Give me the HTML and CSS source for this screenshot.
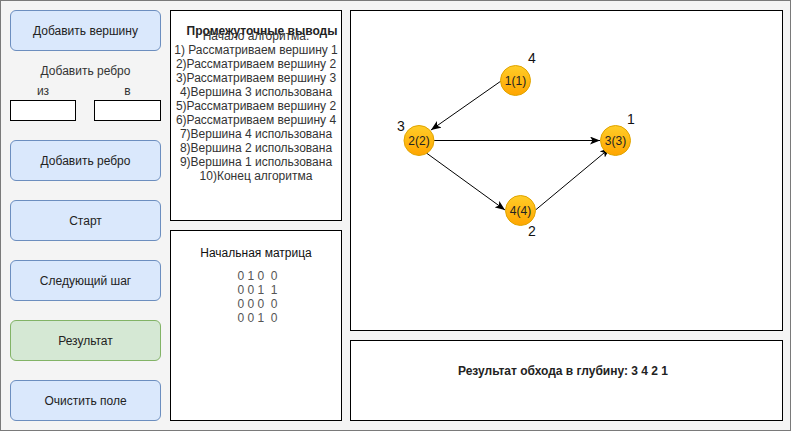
FILE: index.html
```html
<!doctype html>
<html>
  <head>
    <meta charset="utf-8">
    <title>Обход графа в глубину</title>
    <link rel="stylesheet" href="styles.css">
  </head>
  <body>
    <div class="frame">
      <div class="controls">
        <button class="btn">Добавить вершину</button>
        <div class="edgebox">
          <div class="edgetitle">Добавить ребро</div>
          <div class="edgerow">
            <label class="edgefield">из<input type="text" class="edgeinput"></label>
            <label class="edgefield">в<input type="text" class="edgeinput"></label>
          </div>
        </div>
        <button class="btn btn-gap">Добавить ребро</button>
        <button class="btn btn-gap">Старт</button>
        <button class="btn btn-gap">Следующий шаг</button>
        <button class="btn btn-gap btn-green">Результат</button>
        <button class="btn btn-gap">Очистить поле</button>
      </div>
      <div class="middle">
        <div class="panel steps">
          <div class="steptitle">Промежуточные выводы</div>
          <div class="steplist">
            Начало алгоритма.<br>
            1) Рассматриваем вершину 1<br>
            2)Рассматриваем вершину 2<br>
            3)Рассматриваем вершину 3<br>
            4)Вершина 3 использована<br>
            5)Рассматриваем вершину 2<br>
            6)Рассматриваем вершину 4<br>
            7)Вершина 4 использована<br>
            8)Вершина 2 использована<br>
            9)Вершина 1 использована<br>
            10)Конец алгоритма
          </div>
        </div>
        <div class="panel matrix">
          <div class="matrixtitle">Начальная матрица</div>
          <div class="matrixrows">
            0 1 0&nbsp; 0<br>
            0 0 1&nbsp; 1<br>
            0 0 0&nbsp; 0<br>
            0 0 1&nbsp; 0
          </div>
        </div>
      </div>
      <div class="right">
        <div class="panel canvas">
          <svg class="graph" viewBox="351 11 430 319" width="430" height="319">
            <defs>
              <linearGradient id="nodefill" x1="0" y1="0" x2="0" y2="1">
                <stop offset="0" stop-color="#ffcd28"/>
                <stop offset="1" stop-color="#ffa500"/>
              </linearGradient>
              <marker id="arrow" viewBox="0 0 10 8" refX="10" refY="4" markerWidth="10" markerHeight="8" markerUnits="userSpaceOnUse" orient="auto">
                <path d="M0 0 L10 4 L0 8 L2.5 4 Z" fill="#000"/>
              </marker>
            </defs>
            <g class="edges">
              <line x1="501" y1="81" x2="431" y2="130" marker-end="url(#arrow)"/>
              <line x1="434" y1="140.5" x2="600" y2="140.5" marker-end="url(#arrow)"/>
              <line x1="425" y1="152" x2="505" y2="210" marker-end="url(#arrow)"/>
              <line x1="535.5" y1="210" x2="610" y2="148" marker-end="url(#arrow)"/>
            </g>
            <g class="nodes">
              <circle cx="515.5" cy="80.5" r="15"/>
              <circle cx="419" cy="140.5" r="15"/>
              <circle cx="615.5" cy="140.5" r="15"/>
              <circle cx="520.5" cy="210.5" r="15"/>
            </g>
            <g class="nodetext">
              <text x="515.5" y="84.5">1(1)</text>
              <text x="419" y="144.5">2(2)</text>
              <text x="615.5" y="144.5">3(3)</text>
              <text x="520.5" y="214.5">4(4)</text>
            </g>
            <g class="order">
              <text x="532" y="63">4</text>
              <text x="401" y="131">3</text>
              <text x="631" y="124">1</text>
              <text x="532" y="236">2</text>
            </g>
          </svg>
        </div>
        <div class="panel result">Результат обхода в глубину: 3 4 2 1</div>
      </div>
    </div>
  </body>
</html>
```

FILE: styles.css
```css
body {
  margin: 0;
  font-family: 'Liberation Sans', Arial, sans-serif;
  font-size: 12px;
  color: #222;
}
.frame {
  box-sizing: border-box;
  width: 791px;
  height: 431px;
  border: 1px solid #7a7a7a;
  background-color: #f4f4f4;
  padding: 9px 8px 9px 9px;
  display: grid;
  grid-template-columns: 151px 172px 432px;
  column-gap: 9px;
}
.right {
  margin-left: -1px;
  display: grid;
  grid-template-rows: 321px 81px;
  row-gap: 9px;
}
.middle {
  display: grid;
  grid-template-rows: 211px 191px;
  row-gap: 9px;
}
.controls {
  display: flex;
  flex-direction: column;
}
.btn {
  box-sizing: border-box;
  height: 41px;
  width: 151px;
  border: 1px solid #6c8ebf;
  border-radius: 6px;
  background-color: #dae8fc;
  font-family: inherit;
  font-size: 12px;
  color: #222;
  padding: 0;
}
.btn-gap {
  margin-top: 19px;
}
.btn-green {
  background-color: #d5e8d4;
  border-color: #82b366;
}
.edgebox {
  margin-top: 13px;
}
.edgetitle {
  line-height: 14px;
  text-align: center;
  color: #333;
}
.edgerow {
  display: flex;
  justify-content: space-between;
  margin-top: 6px;
}
.edgefield {
  display: flex;
  flex-direction: column;
  align-items: center;
  line-height: 14px;
  color: #333;
}
.edgeinput {
  box-sizing: border-box;
  margin-top: 2px;
  width: 66px;
  height: 21px;
  border: 1px solid #000;
  background: #fff;
  padding: 0;
}
.edgefield + .edgefield .edgeinput {
  width: 67px;
}
.panel {
  box-sizing: border-box;
  border: 1px solid #000;
  background-color: #fff;
}
.steps {
  padding-top: 12px;
  text-align: center;
}
.steptitle {
  font-weight: bold;
  line-height: 14px;
  padding-top: 1px;
  margin-bottom: -9px;
  padding-left: 12px;
  color: #222;
}
.steplist {
  line-height: 14px;
  color: #333;
}
.matrix {
  padding-top: 15px;
  text-align: center;
}
.matrixtitle {
  line-height: 14px;
  color: #111;
}
.matrixrows {
  margin-top: 9px;
  padding-left: 3px;
  line-height: 14px;
  color: #555;
}
.graph {
  display: block;
}
.edges line {
  stroke: #000;
  stroke-width: 1;
}
.nodes circle {
  fill: url(#nodefill);
  stroke: #e0a400;
  stroke-width: 1;
}
.nodetext text {
  font-family: 'Liberation Sans', Arial, sans-serif;
  font-size: 12px;
  fill: #222;
  text-anchor: middle;
}
.order text {
  font-family: 'Liberation Sans', Arial, sans-serif;
  font-size: 14px;
  fill: #111;
  text-anchor: middle;
}
.result {
  padding-top: 23px;
  padding-right: 7px;
  text-align: center;
  font-weight: bold;
  line-height: 14px;
  color: #222;
}
```
